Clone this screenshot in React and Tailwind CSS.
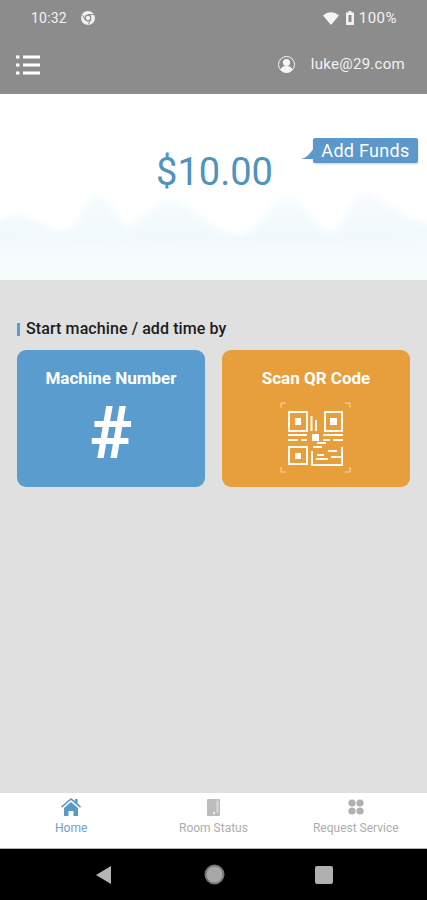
import React from "react";

const Chrome = () => (
  <svg width="14" height="14" viewBox="0 0 14 14" className="ml-[14px]">
    <circle cx="7" cy="7" r="7" fill="#f2f2f2" />
    <circle cx="7" cy="7" r="3.4" fill="#8c8c8c" />
    <circle cx="7" cy="7" r="2.2" fill="#f2f2f2" />
    <path d="M7 3.6h6M4.2 9 1.6 4M9.8 8.8 7 13.6" stroke="#8c8c8c" strokeWidth="1" />
  </svg>
);

const QR = () => (
  <svg width="72" height="72" viewBox="0 0 72 72" fill="none" stroke="#fff" className="mt-[14px]">
    <g strokeWidth="1" opacity="0.6">
      <path d="M1 6V1h5M65 1h5v5M1 65v5h5M70 65v5h-5" />
    </g>
    <g strokeWidth="2" opacity="0.95">
      <rect x="9" y="10" width="18" height="19" />
      <rect x="45" y="10" width="17" height="19" />
      <rect x="9" y="45" width="18" height="17" />
      <path d="M31.500 14v15M36 18v11" />
      <path d="M8 33h19M8 38h10M21 38h6M43 33h20M43 38h7M53 38h10" />
      <path d="M33 45h9M37 41h9M32 49v14h31M37 53h7M48 49h9M36 57h12M51 55h11M62 45v18" />
    </g>
    <g fill="#fff" stroke="none">
      <rect x="15" y="16" width="6" height="7" />
      <rect x="50" y="16" width="7" height="7" />
      <rect x="15" y="51" width="6" height="6" />
      <rect x="32" y="32" width="7" height="7" />
    </g>
  </svg>
);

export default function App() {
  return (
    <div className="w-[427px] h-[900px] flex flex-col bg-[#e0e0e0] overflow-hidden" style={{ fontFamily: "Roboto, sans-serif" }}>
      <div className="h-[94px] shrink-0 bg-[#8c8c8c] flex flex-col text-[#f2f2f2]">
        <div className="h-[35px] flex items-center pl-[31px] pr-[30px] pt-[1px]">
          <span className="text-[14px] tracking-[0.2px]">10:32</span>
          <Chrome />
          <div className="ml-auto flex items-center">
            <svg width="16" height="13" viewBox="0 0 16 13" fill="#f5f5f5"><path d="M0 3.5C4.500 -1 11.500 -1 16 3.500L8 13Z" /></svg>
            <svg width="8" height="14" viewBox="0 0 8 14" className="ml-[7px]"><path d="M2.500 0h3v1.500H8V14H0V1.500h2.500Z" fill="#f2f2f2" /><rect x="2.500" y="4" width="3" height="7" fill="#8c8c8c" /></svg>
            <span className="text-[15px] ml-[5px] tracking-[0.5px]">100%</span>
          </div>
        </div>
        <div className="flex-1 flex items-center pl-[16px] pr-[22px]">
          <svg width="24" height="20" viewBox="0 0 24 20" fill="#fff">
            <rect x="0" y="0.500" width="3.500" height="3" /><rect x="7" y="0.500" width="17" height="3" />
            <rect x="0" y="8.500" width="3.500" height="3" /><rect x="7" y="8.500" width="17" height="3" />
            <rect x="0" y="16.500" width="3.500" height="3" /><rect x="7" y="16.500" width="17" height="3" />
          </svg>
          <svg width="17" height="17" viewBox="0 0 17 17" className="ml-auto">
            <circle cx="8.500" cy="8.500" r="8" fill="none" stroke="#f5f5f5" strokeWidth="1" />
            <circle cx="8.500" cy="6.500" r="3.600" fill="#f5f5f5" />
            <path d="M2.500 14c1-3.500 3.500-4 6-4s5 .5 6 4a8 8 0 0 1-12 0Z" fill="#f5f5f5" />
          </svg>
          <span className="ml-[16px] text-[15px] tracking-[0.28px]">luke@29.com</span>
        </div>
      </div>

      <div className="relative h-[186px] shrink-0 bg-white overflow-hidden">
        <svg className="absolute left-0 bottom-0 blur-[3px] overflow-visible" width="427" height="95" viewBox="0 0 427 95">
          <defs>
            <linearGradient id="m" x1="0" y1="0" x2="0" y2="1">
              <stop offset="0" stopColor="#f3fafc" stopOpacity="0.7" />
              <stop offset="0.45" stopColor="#f1f9fc" stopOpacity="1" />
              <stop offset="1" stopColor="#f9fcfe" stopOpacity="1" />
            </linearGradient>
            <linearGradient id="m2" x1="0" y1="0" x2="0" y2="1">
              <stop offset="0" stopColor="#f5fbfd" stopOpacity="0.8" />
              <stop offset="1" stopColor="#fafdfe" stopOpacity="1" />
            </linearGradient>
          </defs>
          <path d="M-20 45 C0 38 10 28 22 30 C38 34 55 50 70 44 C80 36 88 10 98 10 C110 10 118 38 130 42 C142 34 155 15 172 15 C190 15 208 48 240 50 C258 46 272 12 288 12 C302 12 315 42 332 48 C345 40 352 8 365 8 C380 8 395 34 447 42 V115 H-20Z" fill="url(#m)" />
          <path d="M-20 62 C40 54 70 60 110 58 C160 58 200 68 250 62 C300 58 360 62 447 56 V115 H-20Z" fill="url(#m2)" />
        </svg>
        <div className="relative flex justify-center pt-[54px] pl-[2px]">
          <span className="text-[38px] leading-[48px] text-[#4f93bf]">$10.00</span>
        </div>
        <div className="absolute left-[313px] top-[44px] w-[105px] h-[25px] bg-[#5c98c9] rounded-[2px] flex items-center justify-center text-[18px] text-white tracking-[0.3px] shadow-[0_1px_2px_rgba(0,0,0,0.2)]">
          Add Funds
          <svg className="absolute left-[-12px] top-[10px]" width="13" height="13" viewBox="0 0 13 13" fill="#5c98c9"><path d="M13 0V11H0C5 10 9 6 13 0Z" /></svg>
        </div>
      </div>

      <div className="flex-1 px-[17px] pt-[41px]">
        <div className="flex items-center h-[16px]">
          <div className="w-[3px] h-[13px] bg-[#5b9bd0]" />
          <span className="ml-[6px] text-[16px] font-medium text-[#1c1c1c] tracking-[0.1px]">Start machine / add time by</span>
        </div>
        <div className="mt-[13px] flex gap-[17px]">
          <div className="w-[188px] h-[137px] rounded-[9px] bg-[#5b9ccf] flex flex-col items-center pt-[18px] text-white">
            <span className="text-[17px] leading-[20px] font-bold">Machine Number</span>
            <span className="text-[72px] leading-[76px] font-bold mt-[8px]">#</span>
          </div>
          <div className="w-[188px] h-[137px] rounded-[9px] bg-[#e79f3b] flex flex-col items-center pt-[18px] text-white">
            <span className="text-[17px] leading-[20px] font-bold">Scan QR Code</span>
            <QR />
          </div>
        </div>
      </div>

      <div className="h-[56px] shrink-0 bg-white border-b border-[#b0b0b0] grid grid-cols-3 text-[12px] text-[#adadad]">
        <div className="flex flex-col items-center pt-[5px] text-[#6ba3cc]">
          <svg width="20" height="18" viewBox="0 0 20 18" fill="#5a98c5">
            <path d="M10 0 14 3V1h2.500v4.300L20 8.500l-1 1.200L10 2 1 9.700 0 8.500Z" />
            <path d="M10 4 17 10v8h-4.500v-5h-5v5H3v-8Z" />
          </svg>
          <span className="mt-[4px] leading-[16px]">Home</span>
        </div>
        <div className="flex flex-col items-center pt-[6px]">
          <svg width="13" height="17" viewBox="0 0 13 17"><rect width="13" height="17" rx="1" fill="#bcbcbc" /><rect x="9.500" y="1.500" width="2" height="12" fill="#dcdcdc" /><rect x="6" y="13" width="2" height="2" fill="#eee" /></svg>
          <span className="mt-[4px] leading-[16px]">Room Status</span>
        </div>
        <div className="flex flex-col items-center pt-[6px]">
          <svg width="16" height="16" viewBox="0 0 16 16" fill="#b0b0b0">
            <circle cx="4" cy="4" r="3.600" /><circle cx="12" cy="4" r="3.600" /><circle cx="4" cy="12" r="3.600" /><circle cx="12" cy="12" r="3.600" />
          </svg>
          <span className="mt-[5px] leading-[16px]">Request Service</span>
        </div>
      </div>

      <div className="h-[51px] shrink-0 bg-black flex items-center justify-center">
        <div className="relative w-full h-full">
          <svg className="absolute left-[95px] top-[16px]" width="17" height="20" viewBox="0 0 17 20" fill="#b5b5b5"><path d="M16 1V19L1 10Z" /></svg>
          <svg className="absolute left-[204px] top-[15px]" width="21" height="21" viewBox="0 0 21 21"><circle cx="10.500" cy="10.500" r="9" fill="#a8a8a8" stroke="#777" strokeWidth="2" /></svg>
          <div className="absolute left-[315px] top-[17px] w-[18px] h-[18px] rounded-[2px] bg-[#b0b0b0]" />
        </div>
      </div>
    </div>
  );
}
